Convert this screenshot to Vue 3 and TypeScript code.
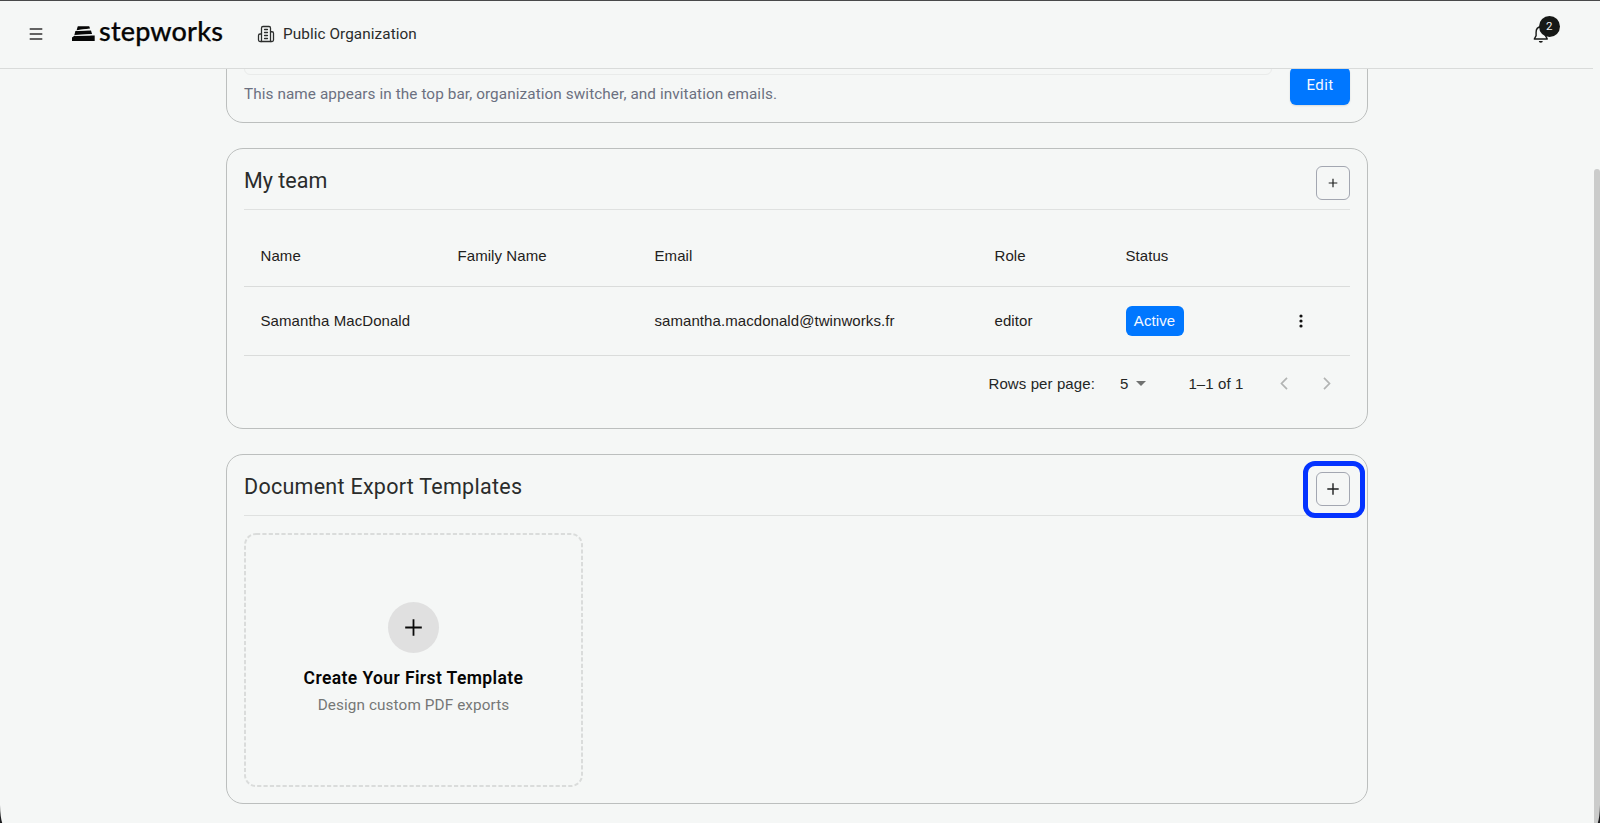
<script setup lang="ts">
interface Member {
  name: string
  familyName: string
  email: string
  role: string
  status: string
}

const columns: string[] = ['Name', 'Family Name', 'Email', 'Role', 'Status', '']

const members: Member[] = [
  {
    name: 'Samantha MacDonald',
    familyName: '',
    email: 'samantha.macdonald@twinworks.fr',
    role: 'editor',
    status: 'Active',
  },
]

const notifications = 2
</script>

<template>
  <div class="page">
    <header class="topbar">
      <svg class="menu" width="14" height="12" viewBox="0 0 14 12">
        <path d="M0.7 1h12.6M0.7 6h12.6M0.7 11h12.6" stroke="#333" stroke-width="1.3" fill="none" />
      </svg>
      <div class="brand">
        <svg class="steps" width="23" height="16" viewBox="0 0 23 16">
          <path d="M5.8 0.3H17.2L18.1 2.6L4.6 4.2Z" />
          <path d="M3.4 5L19 4.4L20.1 8L2.4 9Z" />
          <path d="M0 11.6L2.4 9.8L21 9.6H22.7V15H0Z" />
          <path d="M5.4 4.6L17.5 3.3M3.2 9.6L18.5 8.9" stroke="#f5f7f6" stroke-width="0.8" />
        </svg>
        <span class="wordmark">stepworks</span>
      </div>
      <div class="org">
        <svg class="org-icon" width="18" height="18" viewBox="0 0 24 24">
          <path d="M6 22V4a2 2 0 0 1 2-2h8a2 2 0 0 1 2 2v18Z" />
          <path d="M6 12H4a2 2 0 0 0-2 2v6a2 2 0 0 0 2 2h2" />
          <path d="M18 9h2a2 2 0 0 1 2 2v9a2 2 0 0 1-2 2h-2" />
          <path d="M10 6h4M10 10h4M10 14h4M10 18h4" />
        </svg>
        <span>Public Organization</span>
      </div>
      <div class="bell">
        <svg width="16" height="18" viewBox="0 0 16 18">
          <path
            d="M1.3 14L3.1 10.6V7.2C3.1 4 5 2 7.8 2S12.5 4 12.5 7.2V10.6L14.3 14Z"
            fill="none"
            stroke="#161816"
            stroke-width="1.4"
            stroke-linejoin="round"
          />
          <path d="M5.8 16H9.8A2 1.7 0 0 1 5.8 16Z" fill="#161816" />
        </svg>
        <span class="count">{{ notifications }}</span>
      </div>
    </header>

    <main class="content">
      <section class="card general">
        <div class="field">
          <div class="input"></div>
          <p class="hint">This name appears in the top bar, organization switcher, and invitation emails.</p>
        </div>
        <button class="edit">Edit</button>
      </section>

      <section class="card team">
        <div class="card-head">
          <h2>My team</h2>
          <button class="add">
            <svg width="10" height="10" viewBox="0 0 10 10"><path d="M5 0.7v8.6M0.7 5h8.6" /></svg>
          </button>
        </div>
        <div class="row labels">
          <span v-for="(c, i) in columns" :key="i">{{ c }}</span>
        </div>
        <div v-for="m in members" :key="m.email" class="row member">
          <span>{{ m.name }}</span>
          <span>{{ m.familyName }}</span>
          <span>{{ m.email }}</span>
          <span>{{ m.role }}</span>
          <b class="status">{{ m.status }}</b>
          <span class="more">
            <svg width="4" height="14" viewBox="0 0 4 14">
              <circle cx="2" cy="2" r="1.6" /><circle cx="2" cy="7" r="1.6" /><circle cx="2" cy="12" r="1.6" />
            </svg>
          </span>
        </div>
        <div class="pager">
          <span>Rows per page:</span>
          <span class="size">5</span>
          <svg class="caret" width="10" height="5" viewBox="0 0 10 5"><path d="M0 0h10L5 5Z" fill="#707271" /></svg>
          <span class="range">1–1 of 1</span>
          <svg class="prev" width="8" height="13" viewBox="0 0 8 13"><path d="M7 0.8L1.5 6.5L7 12.2" /></svg>
          <svg class="next" width="8" height="13" viewBox="0 0 8 13"><path d="M1 0.8L6.5 6.5L1 12.2" /></svg>
        </div>
      </section>

      <section class="card templates">
        <div class="card-head">
          <h2>Document Export Templates</h2>
          <button class="add large">
            <svg width="12" height="12" viewBox="0 0 12 12"><path d="M6 0.3v11.4M0.3 6h11.4" /></svg>
            <i class="focus-ring"></i>
          </button>
        </div>
        <div class="create">
          <svg class="dashes" width="339" height="254" viewBox="0 0 339 254">
            <rect x="1" y="1" width="337" height="252" rx="11" />
          </svg>
          <div class="disc">
            <svg width="17" height="17" viewBox="0 0 17 17"><path d="M8.5 0.2v16.6M0.2 8.5h16.6" /></svg>
          </div>
          <strong>Create Your First Template</strong>
          <span>Design custom PDF exports</span>
        </div>
      </section>
    </main>

    <div class="scrollbar"></div>
    <svg class="corner left" width="3" height="20" viewBox="0 0 3 20"><path d="M0 2Q0.3 14 2.2 20H0Z" /></svg>
    <svg class="corner right" width="3" height="20" viewBox="0 0 3 20"><path d="M3 2Q2.7 14 0.8 20H3Z" /></svg>
  </div>
</template>

<style>
body {
  background: #f5f7f6;
}
</style>

<style scoped>
.page {
  position: relative;
  width: 1600px;
  height: 823px;
  overflow: hidden;
  background: #f5f7f6;
  font-family: Roboto, sans-serif;
  font-size: 15px;
  color: #2a2c2b;
}
.page::before {
  content: '';
  position: absolute;
  top: 0;
  left: 0;
  width: 100%;
  height: 1px;
  background: #48494a;
}
svg {
  display: block;
  flex: none;
}
button {
  font: inherit;
  padding: 0;
  cursor: pointer;
}

.topbar {
  box-sizing: border-box;
  width: 1593px;
  height: 69px;
  display: flex;
  align-items: center;
  border-bottom: 1px solid #d9dbda;
  padding-left: 29px;
}
.brand {
  display: flex;
  align-items: center;
  margin-left: 29px;
}
.steps {
  fill: #060606;
}
.wordmark {
  font: 500 27px/32px Lato, sans-serif;
  letter-spacing: 0.15px;
  -webkit-text-stroke: 0.25px #060606;
  color: #060606;
  margin: -7px 0 0 4px;
  width: 125px;
}
.org {
  display: flex;
  align-items: center;
  gap: 8px;
  margin-left: 33px;
  font-size: 15.3px;
  letter-spacing: 0.08px;
}
.org-icon {
  fill: none;
  stroke: #2c2e2d;
  stroke-width: 1.7;
  stroke-linecap: round;
  stroke-linejoin: round;
}
.bell {
  position: relative;
  margin-left: auto;
  margin-right: 44px;
}
.count {
  position: absolute;
  left: 5.8px;
  top: -9px;
  width: 21px;
  height: 21px;
  border-radius: 50%;
  background: #161816;
  color: #f2f2f2;
  font-size: 11.5px;
  line-height: 21px;
  text-align: center;
}

.content {
  height: 754px;
  overflow: hidden;
}
.card {
  box-sizing: border-box;
  width: 1142px;
  margin: 0 0 25px 226px;
  padding: 0 17px;
  border: 1px solid #bcbfbe;
  border-radius: 17px;
}
.general {
  margin-top: -46px;
  height: 100px;
  display: flex;
  align-items: flex-end;
  justify-content: space-between;
  padding-bottom: 17px;
}
.input {
  width: 1026px;
  height: 40px;
  border: 1px solid #e9ebea;
  border-radius: 6px;
}
.hint {
  margin: 9px 0 0;
  font-size: 15.3px;
  line-height: 20px;
  letter-spacing: 0.09px;
  color: #6b7080;
  height: 21px;
}
.edit {
  width: 60px;
  height: 38px;
  border: 0;
  border-radius: 6px;
  background: #0077ff;
  color: #f4f8ff;
  letter-spacing: 0.4px;
  line-height: 36px;
  padding-bottom: 2px;
  box-shadow: 0 1px 2px rgba(0, 0, 0, 0.12);
}

.team {
  height: 281px;
}
.card-head {
  box-sizing: border-box;
  height: 61px;
  display: flex;
  justify-content: space-between;
  padding-top: 17px;
  border-bottom: 1px solid #dfe1e0;
}
h2 {
  margin: 3px 0 0;
  font-size: 21.5px;
  font-weight: 400;
  line-height: 24px;
  letter-spacing: 0.27px;
}
.team h2 {
  letter-spacing: 0;
}
.add {
  position: relative;
  box-sizing: border-box;
  width: 34px;
  height: 34px;
  display: flex;
  align-items: center;
  justify-content: center;
  border: 1px solid #a3a7b1;
  border-radius: 6px;
  background: none;
}
.add path {
  stroke: #1e2020;
  stroke-width: 1.2;
}
.large path {
  stroke-width: 1.4;
}
.focus-ring {
  position: absolute;
  box-sizing: border-box;
  left: -14.5px;
  top: -12.5px;
  width: 62px;
  height: 57px;
  border: 5px solid #0433ff;
  border-radius: 12px;
}

.row {
  box-sizing: border-box;
  display: grid;
  grid-template-columns: 197px 197px 340px 131px 165px 1fr;
  align-items: center;
  padding-left: 16.5px;
  border-bottom: 1px solid #dadcdb;
  font-family: 'Liberation Sans', Arial, sans-serif;
  letter-spacing: 0.07px;
  color: #1f2120;
}
.labels {
  height: 77px;
  padding-top: 15px;
}
.member {
  height: 69px;
}
.member > span:not(.more) {
  padding-bottom: 2px;
}
.status {
  width: 58px;
  height: 30px;
  border-radius: 6px;
  background: #0077ff;
  color: #f4f8ff;
  font-weight: 400;
  line-height: 30px;
  text-align: center;
}
.more {
  padding-left: 8px;
}
.more circle {
  fill: #111;
}
.pager {
  display: flex;
  align-items: center;
  height: 55px;
  padding-left: 744.5px;
  font-family: 'Liberation Sans', Arial, sans-serif;
  letter-spacing: 0.1px;
  color: #242625;
}
.size {
  margin-left: 25px;
}
.caret {
  margin-left: 8px;
}
.range {
  margin-left: 42px;
  width: 55px;
}
.prev,
.next {
  fill: none;
  stroke: #b2b4b3;
  stroke-width: 1.7;
  margin-left: 37px;
}
.next {
  margin-left: 35px;
}

.templates {
  height: 350px;
  margin-bottom: 0;
}
.create {
  position: relative;
  box-sizing: border-box;
  width: 339px;
  height: 254px;
  margin-top: 16.5px;
  padding-top: 69.5px;
  display: flex;
  flex-direction: column;
  align-items: center;
}
.dashes {
  position: absolute;
  left: -0.5px;
  top: 0;
  fill: none;
  stroke: #dadcdb;
  stroke-width: 2;
  stroke-dasharray: 4.2 2.15;
}
.disc {
  width: 51px;
  height: 51px;
  border-radius: 50%;
  background: #e0e0e0;
  display: flex;
  align-items: center;
  justify-content: center;
}
.disc path {
  stroke: #0a0a0a;
  stroke-width: 1.8;
}
.create strong {
  margin-top: 14px;
  font-size: 17.5px;
  font-weight: 600;
  line-height: 22px;
  letter-spacing: 0.4px;
  color: #050505;
}
.create span {
  margin-top: 6px;
  font-size: 15.3px;
  line-height: 20px;
  letter-spacing: 0.1px;
  color: #757776;
}

.scrollbar {
  position: absolute;
  right: 0;
  top: 169px;
  width: 6px;
  height: 660px;
  border-radius: 4px 4px 0 0;
  background: #cbcccb;
}
.corner {
  position: absolute;
  bottom: 0;
  fill: #1c1c1e;
}
.left {
  left: 0;
}
.right {
  right: 0;
}
</style>
